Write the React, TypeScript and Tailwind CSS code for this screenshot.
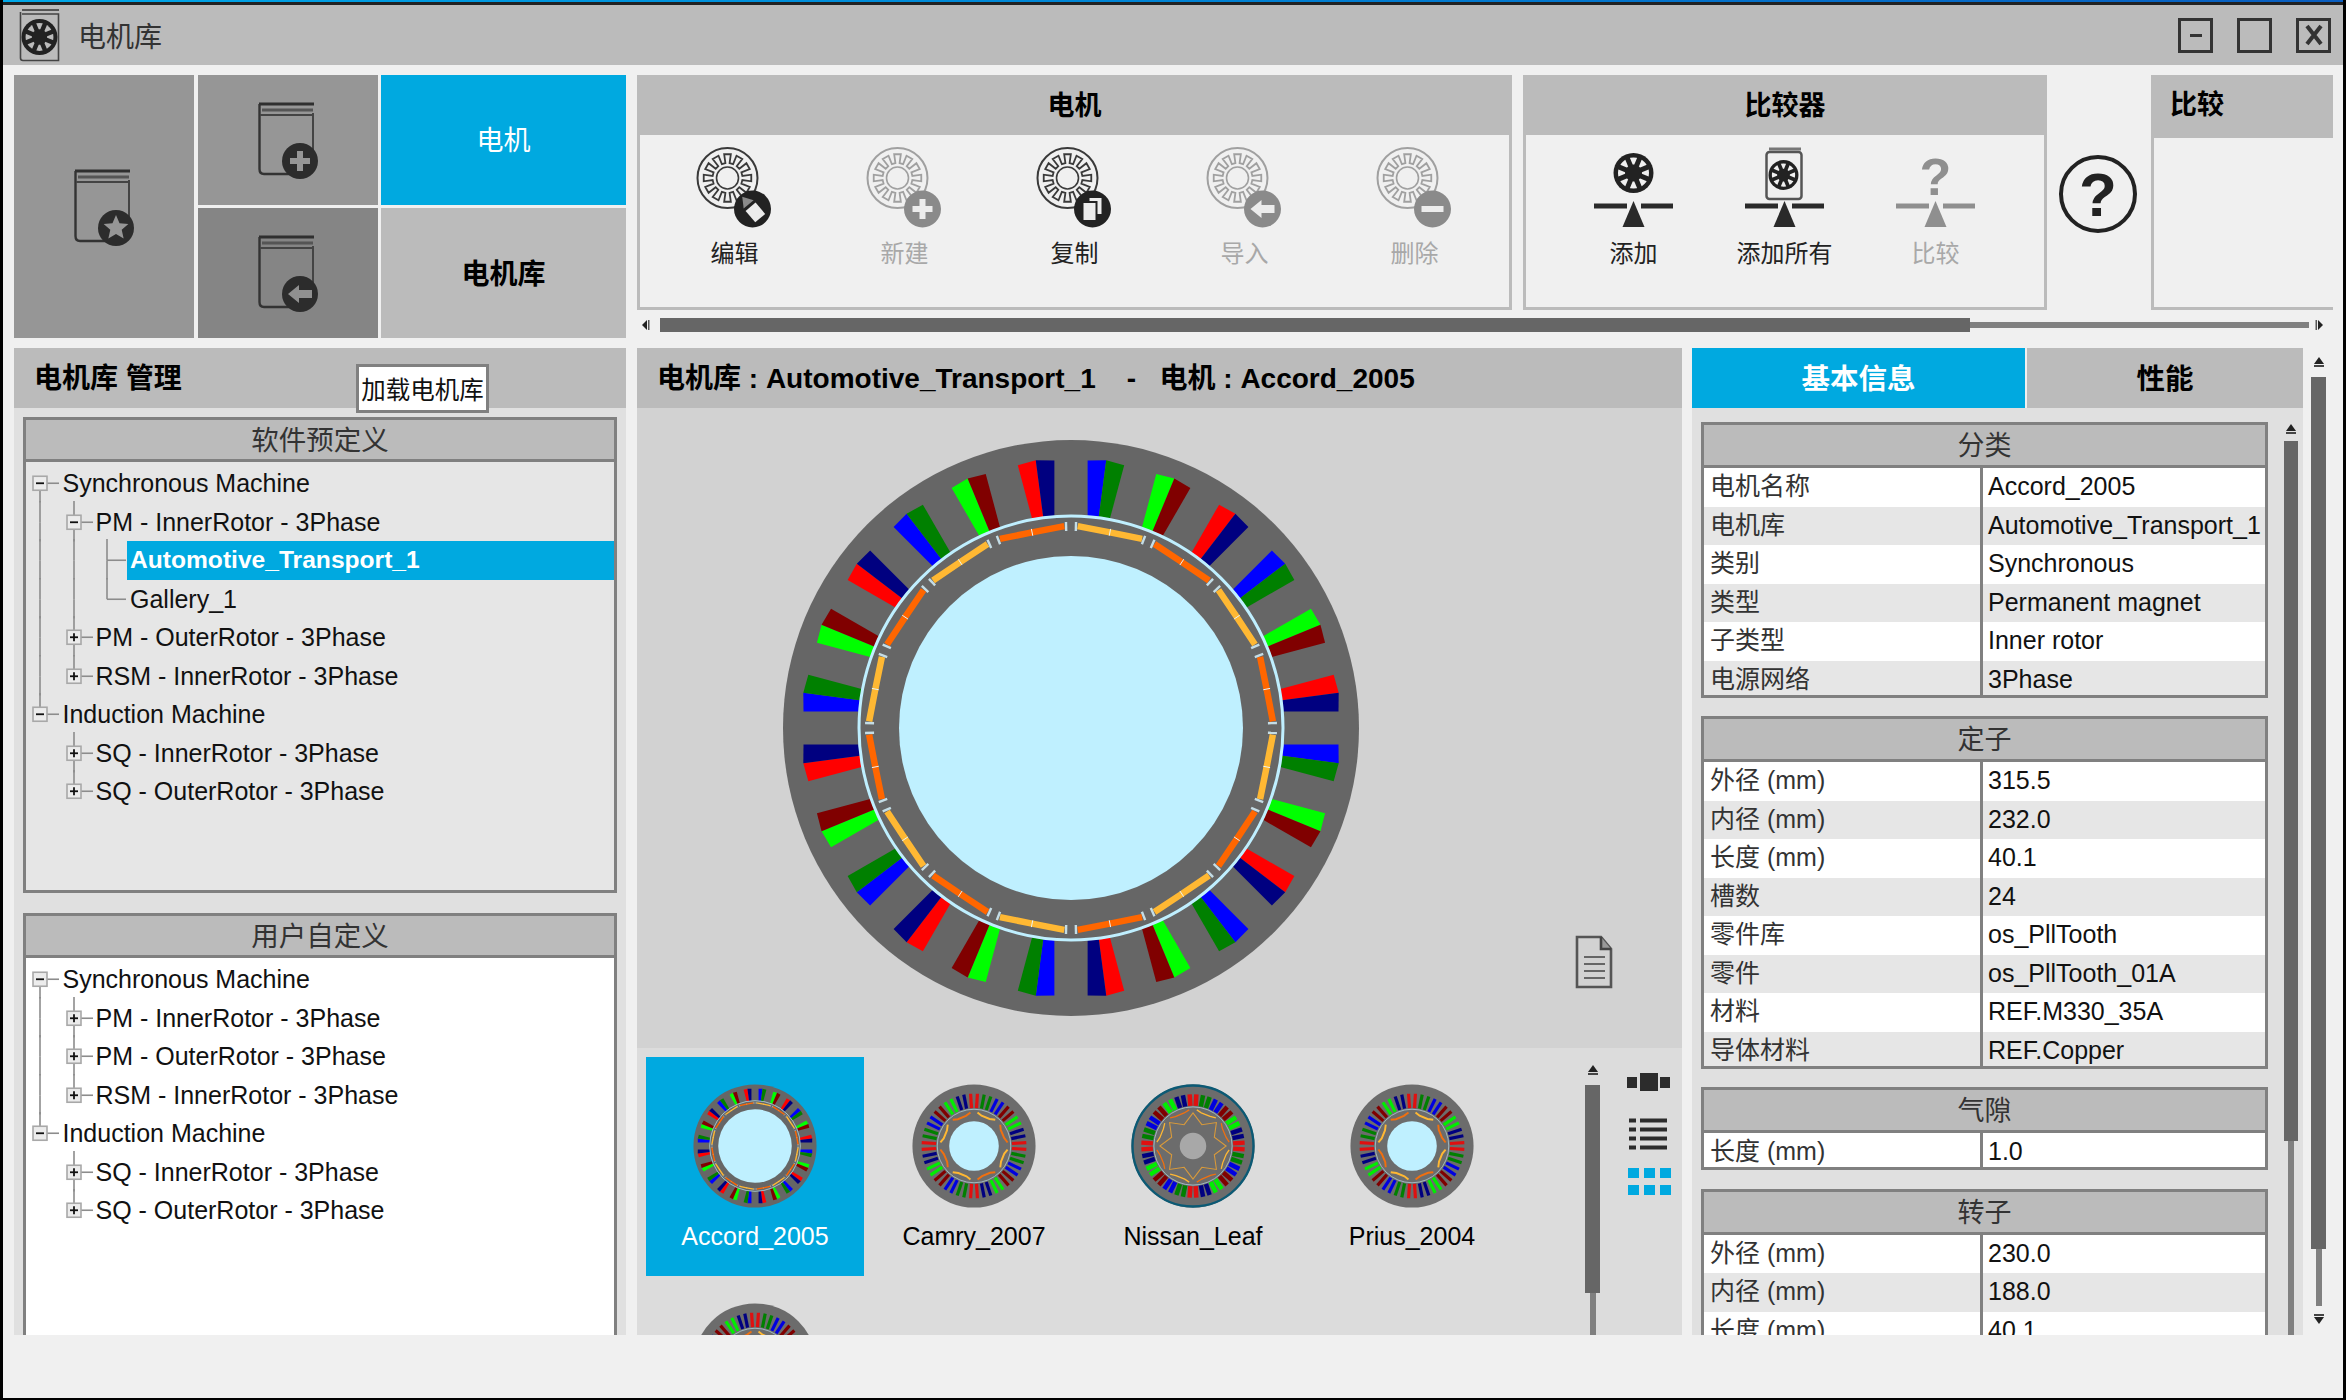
import type { ReactNode } from "react";

const pt = (r: number, deg: number): [number, number] => {
  const a = (deg * Math.PI) / 180;
  return [r * Math.sin(a), -r * Math.cos(a)];
};
const pts = (list: [number, number][]) => list.map((p) => p.map((v) => v.toFixed(2)).join(",")).join(" ");

// slot polygons of the 24-slot machine: teeth have parallel sides
function toothEdge(r: number, deg: number, side: number, w = 16.6): [number, number] {
  const a = (deg * Math.PI) / 180;
  const t = Math.sqrt(r * r - w * w);
  return [w * side * Math.cos(a) + t * Math.sin(a), w * side * Math.sin(a) - t * Math.cos(a)];
}

const SLOT_PAIRS = [
  ["#0000ff", "#008000"],
  ["#00ff00", "#800000"],
  ["#ff0000", "#000080"],
];
const THIN_SLOTS = ["#e01010", "#008000", "#0000e0", "#800000", "#00ee00", "#000080"];

function Magnets({ r, dip, width }: { r: number; dip: number; width: number }) {
  return (
    <>
      {Array.from({ length: 16 }, (_, i) => {
        const a = i * 22.5;
        const color = i % 2 === 0 ? "#ffb833" : "#ff6600";
        return (
          <g key={i}>
            <polyline
              points={pts([pt(r, a + 1.9), pt(r - dip, a + 11.25), pt(r, a + 20.6)])}
              fill="none"
              stroke={color}
              strokeWidth={width}
            />
            <line x1={pt(r - dip - 3.5, a + 11.25)[0]} y1={pt(r - dip - 3.5, a + 11.25)[1]} x2={pt(r - dip + 3.5, a + 11.25)[0]} y2={pt(r - dip + 3.5, a + 11.25)[1]} stroke="#e8f4f8" strokeWidth={1} />
            <line x1={pt(r - 5, a + 1.4)[0]} y1={pt(r - 5, a + 1.4)[1]} x2={pt(r + 4, a + 1.4)[0]} y2={pt(r + 4, a + 1.4)[1]} stroke="#c4dde6" strokeWidth={2.4} />
            <line x1={pt(r - 5, a + 21.1)[0]} y1={pt(r - 5, a + 21.1)[1]} x2={pt(r + 4, a + 21.1)[0]} y2={pt(r + 4, a + 21.1)[1]} stroke="#c4dde6" strokeWidth={2.4} />
          </g>
        );
      })}
    </>
  );
}

function WideSlots() {
  return (
    <>
      {Array.from({ length: 24 }, (_, i) => {
        const th = 7.5 + i * 15;
        const [ccw, cw] = SLOT_PAIRS[i % 3];
        const aIn = toothEdge(213, th - 7.5, 1);
        const aOut = toothEdge(268, th - 7.5, 1);
        const bIn = toothEdge(213, th + 7.5, -1);
        const bOut = toothEdge(268, th + 7.5, -1);
        const mIn = pt(213, th);
        const mOut = pt(270, th);
        return (
          <g key={i}>
            <polygon points={pts([aIn, aOut, mOut, mIn])} fill={ccw} />
            <polygon points={pts([mIn, mOut, bOut, bIn])} fill={cw} />
          </g>
        );
      })}
    </>
  );
}

function ThinSlots({ from, to, width }: { from: number; to: number; width: number }) {
  return (
    <>
      {Array.from({ length: 48 }, (_, i) => {
        const th = -3.75 + i * 7.5;
        const color = THIN_SLOTS[Math.floor(i / 2) % 6];
        const a = pt(from, th);
        const b = pt(to, th);
        return <line key={i} x1={a[0]} y1={a[1]} x2={b[0]} y2={b[1]} stroke={color} strokeWidth={width} />;
      })}
    </>
  );
}

function VMagnets({ r, dip, width }: { r: number; dip: number; width: number }) {
  return (
    <>
      {Array.from({ length: 8 }, (_, i) => {
        const a = i * 45;
        return (
          <polyline
            key={i}
            points={pts([pt(r, a + 6), pt(r - dip, a + 14), pt(r - dip, a + 30), pt(r, a + 39)])}
            fill="none"
            stroke={i % 2 === 0 ? "#ffb833" : "#f07010"}
            strokeWidth={width}
          />
        );
      })}
    </>
  );
}

function Motor({ kind, size }: { kind: "accord" | "camry" | "leaf"; size: number }) {
  return (
    <svg width={size} height={size} viewBox="-290 -290 580 580" className="block shrink-0">
      <circle r={288} fill={kind === "accord" ? "#666666" : "#6c6c6c"} />
      {kind === "accord" && (
        <>
          <WideSlots />
          <circle r={212} fill="none" stroke="#bfefff" strokeWidth={3} />
          <Magnets r={202} dip={2.5} width={6.5} />
          <circle r={172} fill="#bff0ff" />
        </>
      )}
      {kind === "camry" && (
        <>
          <ThinSlots from={178} to={245} width={15} />
          <circle r={172} fill="none" stroke="#a9c6d0" strokeWidth={4} />
          <VMagnets r={158} dip={12} width={9} />
          <circle r={116} fill="#bff0ff" />
        </>
      )}
      {kind === "leaf" && (
        <>
          <circle r={283} fill="none" stroke="#0b5a75" strokeWidth={11} />
          <ThinSlots from={188} to={242} width={21} />
          <circle r={183} fill="none" stroke="#a9c6d0" strokeWidth={4} />
          <VMagnets r={170} dip={10} width={6} />
          <polygon
            points={pts(Array.from({ length: 16 }, (_, i) => pt(i % 2 === 0 ? 155 : 108, i * 22.5)))}
            fill="none"
            stroke="#d99a3a"
            strokeWidth={5}
          />
          <circle r={62} fill="#a8a8a8" />
        </>
      )}
    </svg>
  );
}

function Wheel({ cx, cy, r, bg = "#f0f0f0" }: { cx: number; cy: number; r: number; bg?: string }) {
  const color = "#222";
  return (
    <g transform={`translate(${cx} ${cy}) scale(${r / 20})`}>
      <circle r={20} fill={color} />
      <circle r={15.5} fill={bg} />
      {Array.from({ length: 8 }, (_, i) => {
        const p = pt(18, i * 45 + 22.5);
        return <line key={i} x1={0} y1={0} x2={p[0]} y2={p[1]} stroke={color} strokeWidth={5} />;
      })}
      <circle r={8.5} fill={color} />
    </g>
  );
}

function LineMotor({ cx, cy, color }: { cx: number; cy: number; color: string }) {
  const wave: [number, number][] = [];
  for (let i = 0; i < 12; i++) {
    const a = i * 30;
    wave.push(pt(15, a - 8), pt(24, a - 8), pt(24, a + 8), pt(15, a + 8));
  }
  return (
    <g transform={`translate(${cx} ${cy})`} fill="none" stroke={color}>
      <circle r={30} strokeWidth={2} />
      <polygon points={pts(wave)} strokeWidth={1.8} />
      <circle r={11} strokeWidth={1.6} />
    </g>
  );
}

function Badge({ kind, cx, cy, r, color, inner }: { kind: string; cx: number; cy: number; r: number; color: string; inner: string }) {
  return (
    <g transform={`translate(${cx} ${cy})`}>
      <circle r={r} fill={color} />
      {kind === "plus" && <path d="M-10 0H10M0 -10V10" stroke={inner} strokeWidth={6} />}
      {kind === "minus" && <path d="M-11 0H11" stroke={inner} strokeWidth={6} />}
      {kind === "left" && <polygon points="-12,0 -1,-9 -1,-4 12,-4 12,4 -1,4 -1,9" fill={inner} />}
      {kind === "star" && (
        <polygon points={pts(Array.from({ length: 10 }, (_, i) => pt(i % 2 === 0 ? 13 : 6, i * 36)))} fill={inner} />
      )}
      {kind === "edit" && (
        <g transform="rotate(-40)">
          <rect x={-6.5} y={-3} width={13} height={15} fill={inner} />
          <polygon points="-6.5,-6 6.5,-6 0,-16" fill="#8a8a8a" />
        </g>
      )}
      {kind === "copy" && (
        <g fill={inner} stroke={color} strokeWidth={2}>
          <rect x={-4} y={-12} width={14} height={18} />
          <rect x={-10} y={-7} width={14} height={19} />
        </g>
      )}
    </g>
  );
}

function BookIcon({ kind, fill }: { kind: string; fill: string }) {
  return (
    <svg width={60} height={78} viewBox="0 0 60 78" className="block">
      <path d="M1 3H56" stroke="#2f2f2f" strokeWidth={3} />
      <path d="M4 9H55" stroke="#555" strokeWidth={3} />
      <path d="M1.5 3V68Q1.5 73 6 73H42" fill="none" stroke="#333" strokeWidth={2.4} />
      <path d="M55 12V62M2 14H55" fill="none" stroke="#444" strokeWidth={2} />
      <Badge kind={kind} cx={42} cy={60} r={18} color="#2c2c2c" inner={fill} />
    </svg>
  );
}

function ToolButton({ label, badge, enabled }: { label: string; badge: string; enabled?: boolean }) {
  const dark = enabled ? "#3a3a3a" : "#a0a0a0";
  return (
    <div className="flex w-[170px] flex-col items-center">
      <svg width={170} height={100} viewBox="0 0 170 100" className="block">
        <LineMotor cx={77.5} cy={43} color={dark} />
        <Badge kind={badge} cx={102.5} cy={74} r={18.5} color={enabled ? "#222" : "#8a8a8a"} inner="#ececec" />
      </svg>
      <div className={`text-[24px] leading-[38px] ${enabled ? "text-[#222]" : "text-[#a8a8a8]"}`}>{label}</div>
    </div>
  );
}

function Balance({ color }: { color: string }) {
  return (
    <>
      <path d="M36 71H69M83 71H115" stroke={color} strokeWidth={5} />
      <polygon points="75.5,66 86.5,92 64.5,92" fill={color} />
    </>
  );
}

function CompareButton({ label, icon, enabled }: { label: string; icon: "wheel" | "book" | "question"; enabled?: boolean }) {
  const dark = enabled ? "#2a2a2a" : "#8f8f8f";
  return (
    <div className="flex w-[151px] flex-col items-center">
      <svg width={151} height={100} viewBox="0 0 151 100" className="block">
        {icon === "wheel" && <Wheel cx={75.5} cy={38} r={20} />}
        {icon === "book" && (
          <>
            <path d="M60 14H92" stroke="#777" strokeWidth={3} />
            <rect x={57.5} y={17} width={35} height={47} rx={3} fill="none" stroke="#555" strokeWidth={2.5} />
            <Wheel cx={74.5} cy={40} r={15} />
          </>
        )}
        {icon === "question" && (
          <text x={75.5} y={60} textAnchor="middle" fontSize={52} fontWeight={700} fill={dark} fontFamily="Liberation Sans">
            ?
          </text>
        )}
        <Balance color={dark} />
      </svg>
      <div className={`text-[24px] leading-[38px] ${enabled ? "text-[#222]" : "text-[#a8a8a8]"}`}>{label}</div>
    </div>
  );
}

function ArrowV({ down }: { down?: boolean }) {
  return (
    <svg width={14} height={14} viewBox="0 0 14 14" className={`block shrink-0 ${down ? "rotate-180" : ""}`}>
      <polygon points="7,2 12,9 2,9" fill="#222" />
      <rect x={2} y={10} width={10} height={2} fill="#444" />
    </svg>
  );
}

function ArrowH({ right }: { right?: boolean }) {
  return (
    <svg width={10} height={14} viewBox="0 0 10 14" className={`block shrink-0 ${right ? "rotate-180" : ""}`}>
      <polygon points="2,7 7,2 7,12" fill="#222" />
      <rect x={8} y={2} width={1.5} height={10} fill="#555" />
    </svg>
  );
}

type Cell = { box?: "+" | "-"; up?: boolean; down?: boolean; hz?: boolean } | null;

function GuideCell({ cell, height }: { cell: Cell; height: number }) {
  const mid = height / 2;
  return (
    <svg width={33.5} height={height} viewBox={`0 0 33.5 ${height}`} className="block shrink-0 overflow-visible">
      {cell && (
        <g>
          {cell.up && <line x1={14} y1={-2} x2={14} y2={mid} stroke="#8c8c8c" strokeWidth={1.6} />}
          {cell.down && <line x1={14} y1={mid} x2={14} y2={height} stroke="#8c8c8c" strokeWidth={1.6} />}
          {cell.hz && <line x1={14} y1={mid} x2={33} y2={mid} stroke="#8c8c8c" strokeWidth={1.6} />}
          {cell.box && (
            <g>
              <rect x={7} y={mid - 7} width={14} height={14} fill="#ececec" stroke="#a8a8a8" strokeWidth={1.6} />
              <line x1={10} y1={mid} x2={18} y2={mid} stroke="#111" strokeWidth={1.8} />
              {cell.box === "+" && <line x1={14} y1={mid - 4} x2={14} y2={mid + 4} stroke="#111" strokeWidth={1.8} />}
            </g>
          )}
        </g>
      )}
    </svg>
  );
}

type Node = { label: string; cols: Cell[]; selected?: boolean };

function TreeRow({ node }: { node: Node }) {
  const depth = node.cols.length;
  return (
    <div className="flex h-[38.5px] items-stretch">
      {node.cols.map((c, i) => (
        <GuideCell key={i} cell={c} height={38.5} />
      ))}
      <div
        className={`flex-1 whitespace-nowrap leading-[38px] ${depth === 3 ? "pl-[3.5px]" : depth === 2 ? "pl-[2.5px]" : "pl-[3px]"} ${
          node.selected ? "bg-[#00a9e0] text-[24.6px] font-bold text-white" : "text-[25px] text-[#111]"
        }`}
      >
        {node.label}
      </div>
    </div>
  );
}

const V: Cell = { up: true, down: true };
const PRESET: Node[] = [
  { label: "Synchronous Machine", cols: [{ box: "-", down: true, hz: true }] },
  { label: "PM - InnerRotor - 3Phase", cols: [V, { box: "-", up: true, down: true, hz: true }] },
  { label: "Automotive_Transport_1", selected: true, cols: [V, V, { up: true, down: true, hz: true }] },
  { label: "Gallery_1", cols: [V, V, { up: true, hz: true }] },
  { label: "PM - OuterRotor - 3Phase", cols: [V, { box: "+", up: true, down: true, hz: true }] },
  { label: "RSM - InnerRotor - 3Phase", cols: [V, { box: "+", up: true, hz: true }] },
  { label: "Induction Machine", cols: [{ box: "-", up: true, hz: true }] },
  { label: "SQ - InnerRotor - 3Phase", cols: [null, { box: "+", up: true, down: true, hz: true }] },
  { label: "SQ - OuterRotor - 3Phase", cols: [null, { box: "+", up: true, hz: true }] },
];
const CUSTOM: Node[] = [
  { label: "Synchronous Machine", cols: [{ box: "-", down: true, hz: true }] },
  { label: "PM - InnerRotor - 3Phase", cols: [V, { box: "+", up: true, down: true, hz: true }] },
  { label: "PM - OuterRotor - 3Phase", cols: [V, { box: "+", up: true, down: true, hz: true }] },
  { label: "RSM - InnerRotor - 3Phase", cols: [V, { box: "+", up: true, hz: true }] },
  { label: "Induction Machine", cols: [{ box: "-", up: true, hz: true }] },
  { label: "SQ - InnerRotor - 3Phase", cols: [null, { box: "+", up: true, down: true, hz: true }] },
  { label: "SQ - OuterRotor - 3Phase", cols: [null, { box: "+", up: true, hz: true }] },
];

function TreeGroup({ title, nodes, className }: { title: string; nodes: Node[]; className: string }) {
  return (
    <div className={`flex flex-col border-[3px] border-[#808080] ${className}`}>
      <div className="h-[42px] shrink-0 border-b-[3px] border-[#808080] bg-[#bbbbbb] text-center text-[27.5px] leading-[42px] text-[#333]">
        {title}
      </div>
      <div className="pt-[2px]">
        {nodes.map((n) => (
          <TreeRow key={n.label} node={n} />
        ))}
      </div>
    </div>
  );
}

function PropTable({ title, rows }: { title: string; rows: [string, string][] }) {
  return (
    <div className="border-[3px] border-[#808080] bg-white">
      <div className="h-[43px] border-b-[3px] border-[#808080] bg-[#bbbbbb] text-center text-[27px] leading-[42px] text-[#333]">
        {title}
      </div>
      {rows.map(([k, v], i) => (
        <div
          key={k}
          className={`flex h-[38.5px] overflow-hidden text-[25px] leading-[36px] last:h-[34px] ${i % 2 === 1 ? "bg-[#e6e6e6]" : "bg-white"}`}
        >
          <div className="w-[279px] shrink-0 truncate border-r-[3px] border-[#808080] pl-[6px] text-[#333]">{k}</div>
          <div className="whitespace-nowrap pl-[5px] text-[#111]">{v}</div>
        </div>
      ))}
    </div>
  );
}

function SectionPanel({ title, children, className }: { title: string; children: ReactNode; className: string }) {
  return (
    <div className={`flex h-[235px] flex-col border-[3px] border-[#bbbbbb] ${className}`}>
      <div className="h-[57px] shrink-0 bg-[#bbbbbb] text-center text-[27px] font-bold leading-[57px] text-black">{title}</div>
      {children}
    </div>
  );
}

function WindowButton({ children }: { children?: ReactNode }) {
  return <div className="flex h-[35px] w-[35px] items-center justify-center border-[3px] border-[#333]">{children}</div>;
}

function GalleryItem({ label, kind, selected }: { label?: string; kind: "accord" | "camry" | "leaf"; selected?: boolean }) {
  return (
    <div className={`flex h-[219px] w-[218px] flex-col items-center pt-[27px] ${selected ? "bg-[#00a9e0] text-white" : "text-black"}`}>
      <Motor kind={kind} size={124} />
      {label && <div className="mt-[9px] text-[25px] leading-[38px]">{label}</div>}
    </div>
  );
}

export default function App() {
  return (
    <div className="flex h-[1400px] w-[2346px] flex-col overflow-hidden border-b-2 border-l-[3px] border-r-[3px] border-black bg-[#f0f0f0] font-['Liberation_Sans','Noto_Sans_CJK_SC',sans-serif]">
      <div className="h-[2px] shrink-0 bg-linear-to-r from-[#00a8e8] to-[#0a5ec0]" />
      <div className="h-[3px] shrink-0 bg-[#222]" />

      {/* title bar */}
      <div className="flex h-[60px] shrink-0 items-center bg-[#bbbbbb] pr-[12px]">
        <svg width={42} height={54} viewBox="0 0 42 54" className="ml-[16px] block shrink-0">
          <path d="M3 2H40" stroke="#555" strokeWidth={2} />
          <path d="M1.5 4V50Q1.5 52.5 4 52.5H39.5V6H3" fill="none" stroke="#444" strokeWidth={1.6} />
          <Wheel cx={20.5} cy={29} r={18} bg="#bbbbbb" />
        </svg>
        <div className="ml-[17px] pt-[5px] text-[28px] leading-none text-[#333]">电机库</div>
        <div className="ml-auto flex gap-[24px]">
          <WindowButton>
            <div className="h-[3px] w-[12px] bg-[#333]" />
          </WindowButton>
          <WindowButton />
          <WindowButton>
            <svg width={20} height={24} viewBox="0 0 20 24" className="block">
              <path d="M3 3L17 21M17 3L3 21" stroke="#333" strokeWidth={4} />
            </svg>
          </WindowButton>
        </div>
      </div>

      {/* top ribbon */}
      <div className="mt-[10px] flex h-[263px] shrink-0 pl-[11px]">
        <div className="grid h-[263px] w-[612px] shrink-0 grid-cols-[180px_180px_245px] grid-rows-[130px_130px] gap-x-[3.5px] gap-y-[3px]">
          <div className="row-span-2 flex items-center justify-center bg-[#969696]">
            <BookIcon kind="star" fill="#969696" />
          </div>
          <div className="flex items-center justify-center bg-[#969696]">
            <BookIcon kind="plus" fill="#969696" />
          </div>
          <div className="flex items-center justify-center bg-[#00a9e0] pt-[3px] text-[27px] text-white">电机</div>
          <div className="flex items-center justify-center bg-[#858585]">
            <BookIcon kind="left" fill="#909090" />
          </div>
          <div className="flex items-center justify-center bg-[#bbbbbb] pt-[3px] text-[28px] font-bold text-black">电机库</div>
        </div>

        <div className="ml-[11px] flex w-[1696px] flex-col">
          <div className="flex">
            <SectionPanel title="电机" className="w-[875px]">
              <div className="flex justify-center">
                <ToolButton label="编辑" badge="edit" enabled />
                <ToolButton label="新建" badge="plus" />
                <ToolButton label="复制" badge="copy" enabled />
                <ToolButton label="导入" badge="left" />
                <ToolButton label="删除" badge="minus" />
              </div>
            </SectionPanel>
            <SectionPanel title="比较器" className="ml-[11px] w-[524px]">
              <div className="flex pl-[32px]">
                <CompareButton label="添加" icon="wheel" enabled />
                <CompareButton label="添加所有" icon="book" enabled />
                <CompareButton label="比较" icon="question" />
              </div>
            </SectionPanel>
            <div className="flex w-[104px] shrink-0 items-start justify-center pt-[79px]">
              <svg width={80} height={80} viewBox="0 0 80 80" className="-ml-[3px] block">
                <ellipse cx={40} cy={40} rx={37} ry={37} fill="none" stroke="#222" strokeWidth={4} />
                <text x={40} y={62} textAnchor="middle" fontSize={62} fontWeight={700} fill="#222" fontFamily="Liberation Sans">
                  ?
                </text>
              </svg>
            </div>
            <div className="h-[235px] w-[182px] shrink-0 border-b-[3px] border-l-[3px] border-[#bbbbbb]">
              <div className="h-[63px] bg-[#bbbbbb] pl-[16px] text-[27px] font-bold leading-[60px] text-black">比较</div>
            </div>
          </div>
          <div className="flex h-[28px] items-center pl-[3px] pr-[8px] pt-[2px]">
            <ArrowH />
            <div className="ml-[10px] flex flex-1 items-center">
              <div className="h-[14px] w-[1310px] bg-[#666666]" />
              <div className="h-[6px] flex-1 bg-[#808080]" />
            </div>
            <div className="ml-[6px]">
              <ArrowH right />
            </div>
          </div>
        </div>
      </div>

      {/* main */}
      <div className="mt-[10px] flex h-[987px] shrink-0 overflow-hidden pl-[11px]">
        {/* library tree */}
        <div className="flex w-[612px] shrink-0 flex-col bg-[#e0e0e0]">
          <div className="relative h-[60px] shrink-0 whitespace-pre bg-[#bbbbbb] pl-[20px] text-[28px] font-bold leading-[62px] text-black">
            电机库 管理
            <div className="absolute left-[342px] top-[16px] z-10 h-[49px] w-[133px] border-[3px] border-[#808080] bg-white text-center text-[24.5px] font-normal leading-[48px] text-[#111]">
              加载电机库
            </div>
          </div>
          <div className="flex flex-col px-[9px] pt-[9px]">
            <TreeGroup title="软件预定义" nodes={PRESET} className="h-[476px] bg-[#e6e6e6]" />
            <TreeGroup title="用户自定义" nodes={CUSTOM} className="mt-[20px] h-[500px] bg-white" />
          </div>
        </div>

        {/* motor view */}
        <div className="ml-[11px] flex w-[1045px] shrink-0 flex-col">
          <div className="h-[60px] shrink-0 whitespace-pre bg-[#bbbbbb] pl-[20px] text-[28px] font-bold leading-[62px] text-black">
            {"电机库 : Automotive_Transport_1    -   电机 : Accord_2005"}
          </div>
          <div className="flex h-[640px] shrink-0 bg-[#d2d2d2] pl-[144px] pt-[30px]">
            <Motor kind="accord" size={580} />
            <svg width={38} height={54} viewBox="0 0 38 54" className="ml-[214px] mt-[497px] block shrink-0">
              <path d="M2 2H26L36 14V52H2Z" fill="none" stroke="#555" strokeWidth={2.6} />
              <path d="M26 2V14H36" fill="#999" stroke="#444" strokeWidth={2.6} />
              <path d="M9 22H30M9 29H30M9 36H30M9 43H30" stroke="#666" strokeWidth={2.2} />
            </svg>
          </div>
          <div className="flex min-h-0 flex-1 overflow-hidden bg-[#dcdcdc] pl-[9px] pt-[9px]">
            <div className="grid w-[876px] shrink-0 grid-cols-[219px_219px_219px_219px] content-start">
              <GalleryItem label="Accord_2005" kind="accord" selected />
              <GalleryItem label="Camry_2007" kind="camry" />
              <GalleryItem label="Nissan_Leaf" kind="leaf" />
              <GalleryItem label="Prius_2004" kind="camry" />
              <GalleryItem kind="camry" />
            </div>
            <div className="ml-[63px] flex w-[15px] shrink-0 flex-col items-center pt-[6px]">
              <ArrowV />
              <div className="mt-[8px] h-[208px] w-[15px] shrink-0 bg-[#666666]" />
              <div className="w-[6px] flex-1 bg-[#808080]" />
            </div>
            <div className="ml-[27px] flex w-[45px] shrink-0 flex-col pt-[16px]">
              <svg width={45} height={20} viewBox="0 0 45 20" className="block">
                <rect x={0} y={4} width={10} height={11} fill="#2c2c2c" />
                <rect x={13} y={0} width={18} height={18} fill="#2c2c2c" />
                <rect x={33} y={4} width={10} height={11} fill="#2c2c2c" />
              </svg>
              <svg width={45} height={34} viewBox="0 0 45 34" className="mt-[24px] block">
                {[3, 12, 21, 30].map((y) => (
                  <g key={y}>
                    <rect x={2} y={y - 1.5} width={7} height={4} fill="#2c2c2c" />
                    <rect x={13} y={y - 1.5} width={27} height={4} fill="#2c2c2c" />
                  </g>
                ))}
              </svg>
              <div className="ml-[1px] mt-[17px] grid w-[43px] grid-cols-3 gap-x-[5px] gap-y-[7px]">
                {[0, 1, 2, 3, 4, 5].map((i) => (
                  <div key={i} className="h-[10px] bg-[#00a9e0]" />
                ))}
              </div>
            </div>
          </div>
        </div>

        {/* properties */}
        <div className="ml-[10px] flex w-[611px] shrink-0 flex-col">
          <div className="flex h-[60px] shrink-0 gap-[2px] text-[28.5px] font-bold leading-[62px]">
            <div className="w-[333px] bg-[#00a9e0] text-center text-white">基本信息</div>
            <div className="flex-1 bg-[#bbbbbb] text-center text-black">性能</div>
          </div>
          <div className="flex min-h-0 flex-1 overflow-hidden bg-[#e0e0e0] pl-[9px] pt-[14px]">
            <div className="flex w-[567px] shrink-0 flex-col gap-[18.5px]">
              <PropTable
                title="分类"
                rows={[
                  ["电机名称", "Accord_2005"],
                  ["电机库", "Automotive_Transport_1"],
                  ["类别", "Synchronous"],
                  ["类型", "Permanent magnet"],
                  ["子类型", "Inner rotor"],
                  ["电源网络", "3Phase"],
                ]}
              />
              <PropTable
                title="定子"
                rows={[
                  ["外径 (mm)", "315.5"],
                  ["内径 (mm)", "232.0"],
                  ["长度 (mm)", "40.1"],
                  ["槽数", "24"],
                  ["零件库", "os_PllTooth"],
                  ["零件", "os_PllTooth_01A"],
                  ["材料", "REF.M330_35A"],
                  ["导体材料", "REF.Copper"],
                ]}
              />
              <PropTable title="气隙" rows={[["长度 (mm)", "1.0"]]} />
              <PropTable
                title="转子"
                rows={[
                  ["外径 (mm)", "230.0"],
                  ["内径 (mm)", "188.0"],
                  ["长度 (mm)", "40.1"],
                ]}
              />
            </div>
            <div className="ml-[16px] flex w-[14px] shrink-0 flex-col items-center">
              <ArrowV />
              <div className="mt-[5px] h-[700px] w-[14px] shrink-0 bg-[#666666]" />
              <div className="w-[6px] flex-1 bg-[#808080]" />
            </div>
          </div>
        </div>

        {/* outer vertical scrollbar */}
        <div className="ml-[8px] flex w-[15px] shrink-0 flex-col items-center pt-[7px]">
          <ArrowV />
          <div className="mt-[8px] h-[872px] w-[15px] shrink-0 bg-[#666666]" />
          <div className="h-[57px] w-[6px] shrink-0 bg-[#808080]" />
          <div className="mt-[6px]">
            <ArrowV down />
          </div>
        </div>
      </div>
    </div>
  );
}
